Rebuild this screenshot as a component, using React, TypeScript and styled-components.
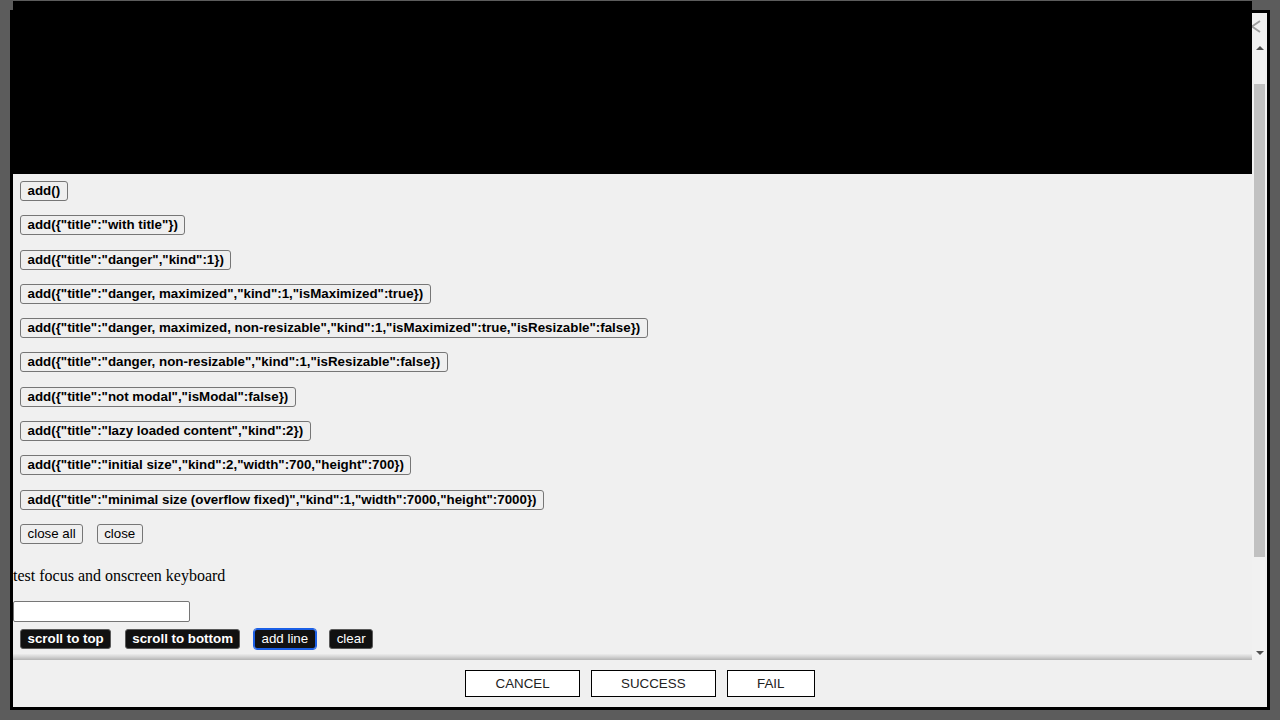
import React from "react";
import styled, { createGlobalStyle, css } from "styled-components";

const GlobalStyle = createGlobalStyle`
  html, body {
    margin: 0;
    padding: 0;
    height: 100%;
    overflow: hidden;
  }
  body {
    background: #5c5c5c;
    font-family: "Liberation Sans", Arial, sans-serif;
  }
`;

const Page = styled.div`
  padding: 10px;
`;

const Dialog = styled.div`
  width: 1260px;
  height: 700px;
  box-sizing: border-box;
  border: 3px solid #000;
  background: #f0f0f0;
  display: flex;
  flex-direction: column;
`;

const TitleBar = styled.div`
  height: 27px;
  flex: none;
  display: flex;
  align-items: center;
  justify-content: flex-end;
  padding-right: 6px;
`;

// the onscreen keyboard placeholder sits over the top of the dialog
const KeyboardCover = styled.div`
  position: fixed;
  top: 1px;
  left: 13px;
  width: 1239px;
  height: 173px;
  background: #000;
  z-index: 5;
`;

const Viewport = styled.div`
  height: 620px;
  flex: none;
  display: flex;
`;

const ScrollColumn = styled.div`
  flex: 1;
  display: flex;
  flex-direction: column;
  min-width: 0;
`;

const Content = styled.div`
  flex: 1;
  overflow: hidden;
  padding-top: 141px;
`;

const ScrollShadow = styled.div`
  height: 6px;
  flex: none;
  background: linear-gradient(#ececec, #d2d2d2 50%, #b4b4b4);
`;

const Scrollbar = styled.div`
  width: 15px;
  flex: none;
  display: flex;
  flex-direction: column;
  background: #f1f1f1;
`;

const ArrowButton = styled.div<{ $down?: boolean }>`
  height: 15px;
  display: flex;
  align-items: center;
  justify-content: center;

  &::before {
    content: "";
    width: 0;
    height: 0;
    border-left: 4px solid transparent;
    border-right: 4px solid transparent;
    ${(p) =>
      p.$down
        ? css`border-top: 4px solid #505050;`
        : css`border-bottom: 4px solid #505050;`}
  }
`;

const Track = styled.div`
  flex: 1;
  padding: 29px 2px 0;
`;

const Thumb = styled.div`
  height: 473px;
  background: #c1c1c1;
`;

const ButtonStack = styled.div`
  display: flex;
  flex-direction: column;
  align-items: flex-start;
  gap: 14.3px;
  padding-left: 7px;
`;

const Row = styled.div<{ $flush?: boolean }>`
  display: flex;
  gap: 13.5px;
  padding-left: ${(p) => (p.$flush ? 0 : 7)}px;
`;

const TestButton = styled.button<{ $bold?: boolean; $dark?: boolean; $focused?: boolean }>`
  height: 20px;
  box-sizing: border-box;
  padding: 0 6.5px;
  margin: 0;
  font-family: "Liberation Sans", Arial, sans-serif;
  font-size: 13.333px;
  font-weight: ${(p) => (p.$bold ? 700 : 400)};
  line-height: 18px;
  border: 1px solid #767676;
  border-radius: 3px;
  background: #efefef;
  color: #000;
  white-space: nowrap;

  ${(p) =>
    p.$dark &&
    css`
      background: #111;
      color: #fff;
      border-color: #5a5a5a;
    `}

  ${(p) =>
    p.$focused &&
    css`
      border-color: #1b5fe6;
      outline: 1px solid #1b5fe6;
    `}
`;

const Caption = styled.p`
  margin: 23px 0 0;
  font-family: "Liberation Serif", "Times New Roman", serif;
  font-size: 16px;
  line-height: 18px;
  color: #000;
`;

const TextInput = styled.input`
  display: block;
  margin: 16px 0 7px;
  width: 177px;
  height: 21px;
  box-sizing: border-box;
  border: 1px solid #767676;
  border-radius: 2px;
  background: #fff;
  padding: 1px 2px;
  font-size: 13.333px;
`;

const Footer = styled.div`
  flex: 1;
  display: flex;
  align-items: center;
  justify-content: center;
  gap: 10.5px;
`;

const FooterButton = styled.button`
  height: 27px;
  box-sizing: border-box;
  padding: 0 29.5px;
  border: 1px solid #000;
  border-radius: 0;
  background: #fff;
  color: #222;
  font-family: "Liberation Sans", Arial, sans-serif;
  font-size: 13.333px;
  text-transform: uppercase;
`;

const CloseIcon = () => (
  <svg width="18" height="13" viewBox="0 0 18 13">
    <path d="M1 1 L17 12 M17 1 L1 12" stroke="#9c9c9c" strokeWidth="2" fill="none" />
  </svg>
);

const calls = [
  "add()",
  'add({"title":"with title"})',
  'add({"title":"danger","kind":1})',
  'add({"title":"danger, maximized","kind":1,"isMaximized":true})',
  'add({"title":"danger, maximized, non-resizable","kind":1,"isMaximized":true,"isResizable":false})',
  'add({"title":"danger, non-resizable","kind":1,"isResizable":false})',
  'add({"title":"not modal","isModal":false})',
  'add({"title":"lazy loaded content","kind":2})',
  'add({"title":"initial size","kind":2,"width":700,"height":700})',
  'add({"title":"minimal size (overflow fixed)","kind":1,"width":7000,"height":7000})',
];

export default function App(): React.ReactElement {
  return (
    <>
      <GlobalStyle />
      <KeyboardCover />
      <Page>
        <Dialog>
          <TitleBar>
            <CloseIcon />
          </TitleBar>
          <Viewport>
            <ScrollColumn>
              <Content>
                <ButtonStack>
                  {calls.map((label) => (
                    <TestButton key={label} $bold>
                      {label}
                    </TestButton>
                  ))}
                  <Row $flush>
                    <TestButton>close all</TestButton>
                    <TestButton>close</TestButton>
                  </Row>
                </ButtonStack>
                <Caption>test focus and onscreen keyboard</Caption>
                <TextInput type="text" />
                <Row>
                  <TestButton $bold $dark>
                    scroll to top
                  </TestButton>
                  <TestButton $bold $dark>
                    scroll to bottom
                  </TestButton>
                  <TestButton $dark $focused>
                    add line
                  </TestButton>
                  <TestButton $dark>clear</TestButton>
                </Row>
              </Content>
              <ScrollShadow />
            </ScrollColumn>
            <Scrollbar>
              <ArrowButton />
              <Track>
                <Thumb />
              </Track>
              <ArrowButton $down />
            </Scrollbar>
          </Viewport>
          <Footer>
            <FooterButton>Cancel</FooterButton>
            <FooterButton>Success</FooterButton>
            <FooterButton>Fail</FooterButton>
          </Footer>
        </Dialog>
      </Page>
    </>
  );
}
